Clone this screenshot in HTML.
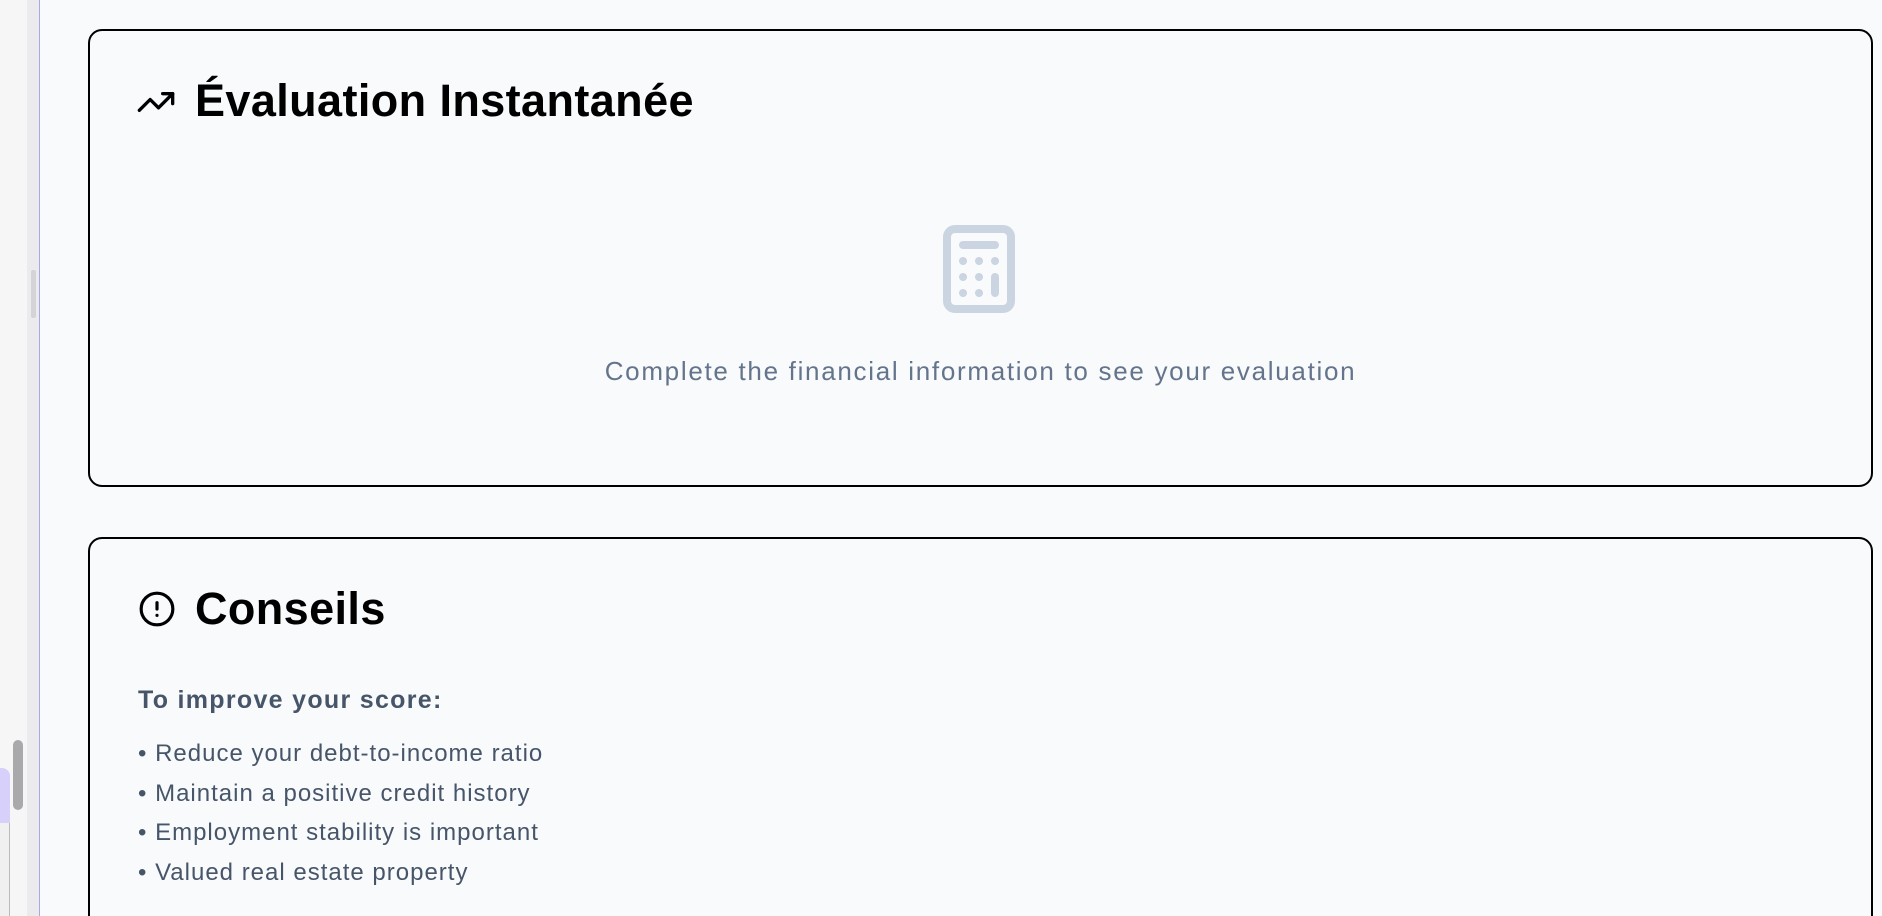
<!DOCTYPE html>
<html><head><meta charset="utf-8"><style>
*{box-sizing:border-box;margin:0;padding:0}
html,body{width:1882px;height:916px;overflow:hidden}
body{background:#f8fafc;font-family:"Liberation Sans",sans-serif;position:relative}
.wrap{position:absolute;left:0;top:0;width:1882px;height:916px;overflow:hidden}
.sb1{position:absolute;left:0;top:0;width:27px;height:916px;background:#f6f6f7}
.sb2{position:absolute;left:27px;top:0;width:12px;height:916px;background:#ebebed}
.line{position:absolute;left:39px;top:0;width:1px;height:916px;background:#aaa6ee}
.handle{position:absolute;left:31px;top:270px;width:5px;height:48px;background:#d4d4d6;border-radius:2px}
.tab{position:absolute;left:0;top:768px;width:10px;height:55px;background:#d6d0fa;border-radius:0 8px 0 0}
.tab2{position:absolute;left:0;top:823px;width:10px;height:93px;background:#f0f0f0;border-right:1px solid #bbb}
.thumb{position:absolute;left:13px;top:740px;width:10px;height:70px;background:#a9a9ab;border-radius:5px}
.card{position:absolute;left:88px;width:1785px;border:2px solid #000;border-radius:14px;background:#f8fafc}
h2{position:absolute;left:105px;font-size:45px;font-weight:bold;letter-spacing:0.4px;color:#000}
.ic{position:absolute}
.msg{position:absolute;left:0;width:100%;text-align:center;color:#64748b;font-size:26px;letter-spacing:1.7px}
.sub{position:absolute;left:48px;top:147px;font-size:25px;letter-spacing:1.3px;font-weight:bold;color:#475569}
ul{position:absolute;left:48px;top:201px;list-style:none;color:#475569;font-size:24px;letter-spacing:1px}
li{height:39.6px}
</style></head><body><div class="wrap">
<div class="sb1"></div><div class="sb2"></div><div class="line"></div><div class="handle"></div>
<div class="tab"></div><div class="tab2"></div><div class="thumb"></div>
<div class="card" style="top:29px;height:458px">
<svg class="ic" style="left:46px;top:51px" width="40" height="40" viewBox="0 0 24 24" fill="none" stroke="#000" stroke-width="2" stroke-linecap="round" stroke-linejoin="round"><polyline points="22 7 13.5 15.5 8.5 10.5 2 17"/><polyline points="16 7 22 7 22 13"/></svg>
<h2 style="top:44px">Évaluation Instantanée</h2>
<svg class="ic" style="left:841px;top:190px" width="96" height="96" viewBox="0 0 24 24" fill="none" stroke="#cbd5e1" stroke-width="2" stroke-linecap="round" stroke-linejoin="round"><rect width="16" height="20" x="4" y="2" rx="2"/><line x1="8" x2="16" y1="6" y2="6"/><line x1="16" x2="16" y1="14" y2="18"/><path d="M16 10h.01M12 10h.01M8 10h.01M12 14h.01M8 14h.01M12 18h.01M8 18h.01"/></svg>
<div class="msg" style="top:325px">Complete the financial information to see your evaluation</div>
</div>
<div class="card" style="top:537px;height:420px">
<svg class="ic" style="left:48px;top:51px" width="38" height="38" viewBox="0 0 24 24" fill="none" stroke="#000" stroke-width="2" stroke-linecap="round" stroke-linejoin="round"><circle cx="12" cy="12" r="10"/><line x1="12" x2="12" y1="8" y2="12"/><line x1="12" x2="12.01" y1="16" y2="16"/></svg>
<h2 style="top:44px">Conseils</h2>
<div class="sub">To improve your score:</div>
<ul><li>• Reduce your debt-to-income ratio</li><li>• Maintain a positive credit history</li><li>• Employment stability is important</li><li>• Valued real estate property</li></ul>
</div>
</div></body></html>
